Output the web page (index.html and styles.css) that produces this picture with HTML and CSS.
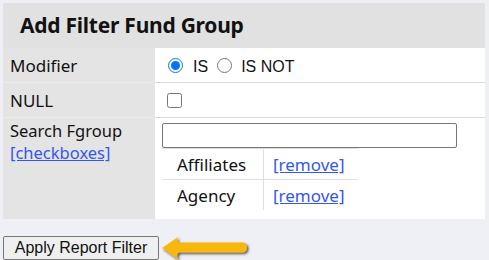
FILE: index.html
```html
<!DOCTYPE html>
<html>
<head>
<meta charset="utf-8">
<link rel="stylesheet" href="styles.css">
</head>
<body>
<div class="panel">
  <div class="title">Add Filter Fund Group</div>
  <div class="row">
    <div class="label label-mid">Modifier</div>
    <div class="value value-mid">
      <input class="radio first" type="radio" name="mod" checked><span class="opt">IS</span>
      <input class="radio second" type="radio" name="mod"><span class="opt">IS NOT</span>
    </div>
  </div>
  <div class="row">
    <div class="label label-mid">NULL</div>
    <div class="value value-mid">
      <input class="check" type="checkbox">
    </div>
  </div>
  <div class="row last">
    <div class="label label-top"><div class="ltext">Search Fgroup</div><a href="#" class="link ltext">[checkboxes]</a></div>
    <div class="value value-top">
      <input class="search" type="text">
      <div class="items">
        <div class="item">
          <div class="name">Affiliates</div>
          <div class="act"><a href="#" class="link">[remove]</a></div>
        </div>
        <div class="item">
          <div class="name">Agency</div>
          <div class="act"><a href="#" class="link">[remove]</a></div>
        </div>
      </div>
    </div>
  </div>
</div>
<div class="actions">
  <button class="apply">Apply Report Filter</button>
  <svg class="arrow" width="92" height="28" viewBox="0 0 92 28">
    <defs>
      <filter id="sh" x="-10%" y="-30%" width="130%" height="170%">
        <feDropShadow dx="1.5" dy="1.5" stdDeviation="0.8" flood-color="#2a2a2a" flood-opacity="0.8"/>
      </filter>
    </defs>
    <path d="M2,13 L18,2 Q16,6 19,7.5 L82,7.5 Q87,7.5 87,12.5 Q87,17.5 82,17.5 L19,17.5 Q16,19 18,24.5 Z" fill="#f7b70e" filter="url(#sh)"/>
  </svg>
</div>
</body>
</html>
```
FILE: styles.css
```css
html, body {
  margin: 0;
  padding: 0;
  background: #eff0f6;
}
body {
  padding: 3px;
  font-family: "Noto Sans", "DejaVu Sans", sans-serif;
  color: #111;
}
.panel {
  width: 482px;
  background: #ffffff;
}
.title {
  height: 45px;
  background: #e1e1e1;
  font-weight: bold;
  font-size: 21px;
  letter-spacing: -0.25px;
  line-height: 45px;
  padding-left: 17px;
  color: #111;
}
.row {
  display: grid;
  grid-template-columns: 152px 1fr;
}
.label {
  background: #e4e4e4;
  font-size: 17px;
  padding-left: 7px;
  border-bottom: 1px solid #ececec;
}
.value {
  padding-left: 7px;
  border-bottom: 1px solid #d9d9d9;
}
.label-mid, .value-mid {
  height: 34px;
  display: flex;
  align-items: center;
}
.row.last .label, .row.last .value {
  border-bottom: none;
}
.label-top {
  height: 99px;
  padding-top: 2px;
  display: flex;
  flex-direction: column;
  align-items: flex-start;
}
.ltext {
  font-size: 16.5px;
  height: 22px;
  line-height: 22px;
}
.value-top {
  padding-top: 5px;
  height: 96px;
}
.radio {
  width: 15px;
  height: 15px;
  margin: 0;
}
.radio.first {
  margin-left: 6px;
  margin-right: 10px;
}
.radio.second {
  margin-left: 9px;
  margin-right: 9px;
}
.opt {
  font-family: "Liberation Sans", Arial, sans-serif;
  font-size: 16px;
  color: #111;
  padding-top: 3px;
}
.check {
  width: 15px;
  height: 15px;
  margin: 0 0 0 5px;
}
.search {
  display: block;
  box-sizing: border-box;
  width: 295px;
  height: 25px;
  margin: 0;
  border: 1px solid #767676;
  border-radius: 2px;
  background: #fff;
}
.items {
  width: 196px;
}
.item {
  display: grid;
  grid-template-columns: 102px 94px;
  height: 31px;
  border-top: 1px solid #dedede;
  box-sizing: border-box;
}
.item + .item {
  height: 33px;
  padding-bottom: 2px;
}
.name {
  font-size: 17px;
  padding-left: 15px;
  display: flex;
  align-items: center;
  border-right: 1px solid #dedede;
}
.act {
  font-size: 17px;
  padding-left: 9px;
  display: flex;
  align-items: center;
}
.link {
  color: #3557ee;
  text-decoration: underline;
}
.actions {
  display: flex;
  align-items: center;
  margin-top: 14px;
}
.apply {
  box-sizing: border-box;
  width: 156px;
  height: 24px;
  margin: 0;
  padding: 0 10px;
  font-family: "Liberation Sans", Arial, sans-serif;
  font-size: 16px;
  color: #111;
  background: #efefef;
  border: 1px solid #767676;
  border-radius: 2px;
}
.arrow {
  display: block;
  margin-left: 1px;
  margin-top: 2px;
}
```
